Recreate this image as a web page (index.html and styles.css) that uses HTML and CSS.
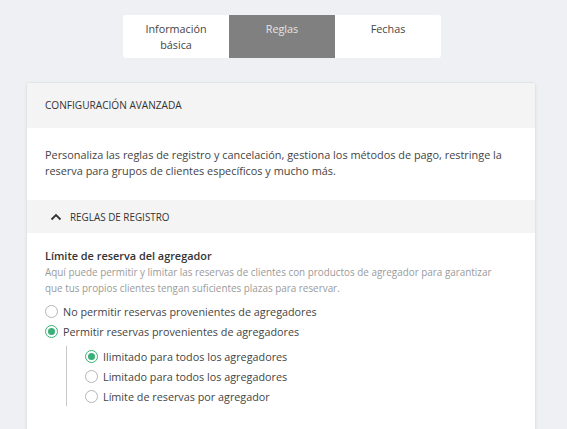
FILE: index.html
```html
<!DOCTYPE html>
<html lang="es">
<head>
  <meta charset="UTF-8">
  <title>Reglas</title>
  <link rel="stylesheet" href="styles.css">
</head>
<body>
  <nav class="tabs">
    <div class="tab">Información<br>básica</div>
    <div class="tab activo">Reglas</div>
    <div class="tab">Fechas</div>
  </nav>

  <div class="card">
    <div class="card-header">CONFIGURACIÓN AVANZADA</div>
    <div class="card-intro">
      Personaliza las reglas de registro y cancelación, gestiona los métodos de pago, restringe la reserva para grupos de clientes específicos y mucho más.
    </div>

    <div class="seccion">
      <svg class="chevron" width="12" height="8" viewBox="0 0 12 8"><path d="M1.5 6.5 L6 2 L10.5 6.5" fill="none" stroke="#333" stroke-width="1.8"/></svg>
      REGLAS DE REGISTRO
    </div>

    <div class="contenido">
      <div class="titulo">Límite de reserva del agregador</div>
      <div class="ayuda">Aquí puede permitir y limitar las reservas de clientes con productos de agregador para garantizar que tus propios clientes tengan suficientes plazas para reservar.</div>

      <div class="opcion"><span class="radio"></span>No permitir reservas provenientes de agregadores</div>
      <div class="opcion"><span class="radio marcado"></span>Permitir reservas provenientes de agregadores</div>

      <div class="subopciones">
        <div class="opcion"><span class="radio marcado"></span>Ilimitado para todos los agregadores</div>
        <div class="opcion"><span class="radio"></span>Limitado para todos los agregadores</div>
        <div class="opcion"><span class="radio"></span>Límite de reservas por agregador</div>
      </div>
    </div>
  </div>
</body>
</html>
```

FILE: styles.css
```css
body {
  margin: 0;
  padding: 15px 0 0;
  background: #eef0f4;
  font-family: "Open Sans", sans-serif;
  color: #333;
}

.tabs {
  display: flex;
  width: 318px;
  margin: 0 0 24px 123px;
  background: #fff;
  border-radius: 3px;
  overflow: hidden;
}

.tab {
  flex: 1;
  height: 43px;
  box-sizing: border-box;
  padding-top: 6px;
  text-align: center;
  font-size: 10.8px;
  line-height: 16px;
  color: #444;
}

.tab.activo {
  background: #808080;
  color: #e4e4e4;
}

.card {
  margin: 0 31px 0 26px;
  background: #fff;
  border: 1px solid #e3e4e8;
  border-radius: 3px 3px 0 0;
  box-shadow: 0 1px 3px rgba(0,0,0,0.06);
  min-height: 360px;
}

.card-header {
  background: #f4f4f4;
  height: 45px;
  line-height: 45px;
  padding-left: 18px;
  font-size: 10.1px;
  color: #333;
}

.card-intro {
  padding: 19px 26px 21px 18px;
  font-size: 10.9px;
  line-height: 16px;
  color: #444;
}

.seccion {
  display: flex;
  align-items: center;
  gap: 8px;
  background: #f4f4f4;
  height: 33px;
  padding-left: 23px;
  font-size: 9.9px;
  color: #333;
}

.contenido {
  padding: 15px 27px 20px 18px;
}

.titulo {
  font-size: 10.9px;
  font-weight: 600;
  line-height: 16px;
  color: #333;
}

.ayuda {
  font-size: 9.9px;
  line-height: 16px;
  color: #9a9a9a;
  margin-bottom: 5px;
}

.opcion {
  display: flex;
  align-items: center;
  gap: 5px;
  height: 20px;
  font-size: 10.8px;
  color: #444;
}

.radio {
  width: 13px;
  height: 13px;
  box-sizing: border-box;
  border: 1px solid #b5b5b5;
  border-radius: 50%;
  background: #fff;
  position: relative;
}

.radio.marcado {
  border: 1.5px solid #3aaf78;
}

.radio.marcado::after {
  content: "";
  position: absolute;
  inset: 2px;
  border-radius: 50%;
  background: #3aaf78;
}

.subopciones {
  margin: 5px 0 0 21px;
  padding-left: 18px;
  border-left: 1px solid #c8c8c8;
}
```
